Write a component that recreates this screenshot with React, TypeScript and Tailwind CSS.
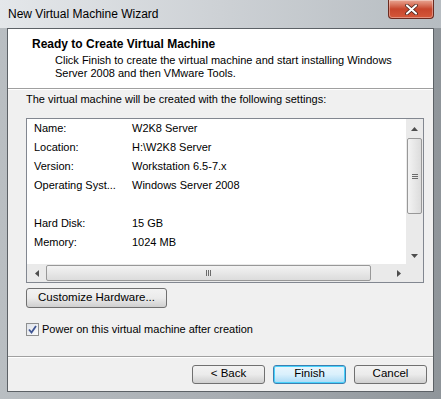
import React from "react";

const ROWS: [string, string][] = [
  ["Name:", "W2K8 Server"],
  ["Location:", "H:\\W2K8 Server"],
  ["Version:", "Workstation 6.5-7.x"],
  ["Operating Syst...", "Windows Server 2008"],
  ["", ""],
  ["Hard Disk:", "15 GB"],
  ["Memory:", "1024 MB"],
];

const btn =
  "flex items-center justify-center rounded-[3px] border border-[#707070] bg-gradient-to-b from-[#f2f2f2] via-[#ebebeb] to-[#cfcfcf] text-[11.5px] text-black";

function Arrow({ dir }: { dir: "up" | "down" | "left" | "right" }) {
  const pts = {
    up: "0,4 3.5,0 7,4",
    down: "0,0 3.5,4 7,0",
    left: "4,0 0,3.5 4,7",
    right: "0,0 4,3.5 0,7",
  }[dir];
  const vertical = dir === "up" || dir === "down";
  return (
    <svg width={vertical ? 7 : 4} height={vertical ? 4 : 7} viewBox={vertical ? "0 0 7 4" : "0 0 4 7"}>
      <polygon points={pts} fill="#4d4d4d" />
    </svg>
  );
}

export default function App() {
  return (
    <div
      className="flex h-[399px] w-[441px] flex-col overflow-hidden bg-gradient-to-r from-[#b9bec2] via-[#a9aeb3] to-[#8f959a]"
      style={{ fontFamily: '"Liberation Sans", Arial, sans-serif' }}
    >
      {/* title bar */}
      <div className="flex h-[28px] shrink-0 items-start justify-between bg-gradient-to-r from-[#e4e7ea] via-[#cdd1d5] to-[#b6bcc1]">
        <span className="pl-[8px] pt-[7px] text-[12px] leading-[14px] text-black">
          New Virtual Machine Wizard
        </span>
        <div className="mr-[7px] flex h-[19px] w-[46px] items-center justify-center rounded-b-[4px] border border-t-0 border-[#6b2a1f] bg-gradient-to-b from-[#e8a593] via-[#c7452c] to-[#d5583a] shadow-[inset_0_0_0_1px_rgba(255,255,255,0.35)]">
          <svg width="13" height="11" viewBox="0 0 13 11">
            <path d="M2 1.5 L11 9.5 M11 1.5 L2 9.5" stroke="#3a1a14" strokeWidth="3.6" strokeLinecap="round" />
            <path d="M2 1.5 L11 9.5 M11 1.5 L2 9.5" stroke="#ffffff" strokeWidth="2.2" strokeLinecap="round" />
          </svg>
        </div>
      </div>

      {/* client area */}
      <div className="mx-[7px] flex h-[364px] flex-col border border-[#5c6166] bg-[#f0f0f0]">
        {/* header */}
        <div className="h-[60px] shrink-0 border-b border-[#a0a0a0] bg-white pl-[24px] pt-[8px] shadow-[0_1px_0_#ffffff]">
          <div className="text-[12px] font-bold leading-[15px] text-black">
            Ready to Create Virtual Machine
          </div>
          <div className="pl-[23px] pt-[2px] text-[11px] leading-[13px] text-black">
            Click Finish to create the virtual machine and start installing Windows
            <br />
            Server 2008 and then VMware Tools.
          </div>
        </div>

        {/* body */}
        <div className="flex flex-1 flex-col px-[18px]">
          <div className="pt-[3px] text-[11px] leading-[14px] text-black">
            The virtual machine will be created with the following settings:
          </div>

          <div className="mt-[12px] flex h-[165px] w-[398px] flex-col border border-[#828790] bg-white">
            <div className="flex h-[145px]">
              <div className="flex-1 pl-[7px]">
                {ROWS.map(([k, v], i) => (
                  <div key={i} className="flex h-[19px] items-center text-[11px] text-black">
                    <span className="w-[98px]">{k}</span>
                    <span>{v}</span>
                  </div>
                ))}
              </div>
              {/* vertical scrollbar */}
              <div className="flex w-[17px] flex-col items-center bg-[#eaeaea]">
                <div className="flex h-[19px] items-center">
                  <Arrow dir="up" />
                </div>
                <div className="flex h-[76px] w-[15px] items-center justify-center rounded-[2px] border border-[#989898] bg-gradient-to-r from-[#f3f3f3] to-[#dcdcdc]">
                  <div className="flex flex-col gap-[1px]">
                    <div className="h-px w-[6px] bg-[#6b6b6b]" />
                    <div className="h-px w-[6px] bg-[#6b6b6b]" />
                    <div className="h-px w-[6px] bg-[#6b6b6b]" />
                  </div>
                </div>
                <div className="flex-1" />
                <div className="flex h-[17px] items-center">
                  <Arrow dir="down" />
                </div>
              </div>
            </div>
            {/* horizontal scrollbar */}
            <div className="flex h-[18px] items-center bg-[#eaeaea]">
              <div className="flex w-[19px] justify-center">
                <Arrow dir="left" />
              </div>
              <div className="flex h-[16px] w-[325px] items-center justify-center rounded-[2px] border border-[#989898] bg-gradient-to-b from-[#f3f3f3] to-[#dcdcdc]">
                <div className="flex gap-[1px]">
                  <div className="h-[6px] w-px bg-[#6b6b6b]" />
                  <div className="h-[6px] w-px bg-[#6b6b6b]" />
                  <div className="h-[6px] w-px bg-[#6b6b6b]" />
                </div>
              </div>
              <div className="flex-1" />
              <div className="flex w-[32px] justify-start pl-[6px]">
                <Arrow dir="right" />
              </div>
            </div>
          </div>

          <div className={`${btn} mt-[5px] h-[20px] w-[141px]`}>Customize Hardware...</div>

          <div className="mt-[13px] flex items-center gap-[3px]">
            <div className="flex h-[13px] w-[13px] items-center justify-center border border-[#8e8f8f] bg-gradient-to-br from-[#dfe3ea] to-[#fbfbfb]">
              <svg width="9" height="9" viewBox="0 0 9 9">
                <path d="M1 4.5 L3.5 7.5 L8 1" fill="none" stroke="#3f5593" strokeWidth="1.8" />
              </svg>
            </div>
            <span className="text-[11px] text-black">Power on this virtual machine after creation</span>
          </div>
        </div>

        {/* footer */}
        <div className="flex h-[35px] shrink-0 items-center justify-end gap-[8px] border-t border-[#a0a0a0] pr-[6px] shadow-[inset_0_1px_0_#ffffff]">
          <div className={`${btn} h-[19px] w-[73px]`}>&lt; Back</div>
          <div className="flex h-[19px] w-[73px] items-center justify-center rounded-[3px] border border-[#3c7fb1] bg-gradient-to-b from-[#eaf6fd] via-[#d9f0fc] to-[#a7d9f5] text-[11.5px] text-black shadow-[inset_0_0_0_1px_#48d2fb]">
            Finish
          </div>
          <div className={`${btn} h-[19px] w-[73px]`}>Cancel</div>
        </div>
      </div>
    </div>
  );
}
